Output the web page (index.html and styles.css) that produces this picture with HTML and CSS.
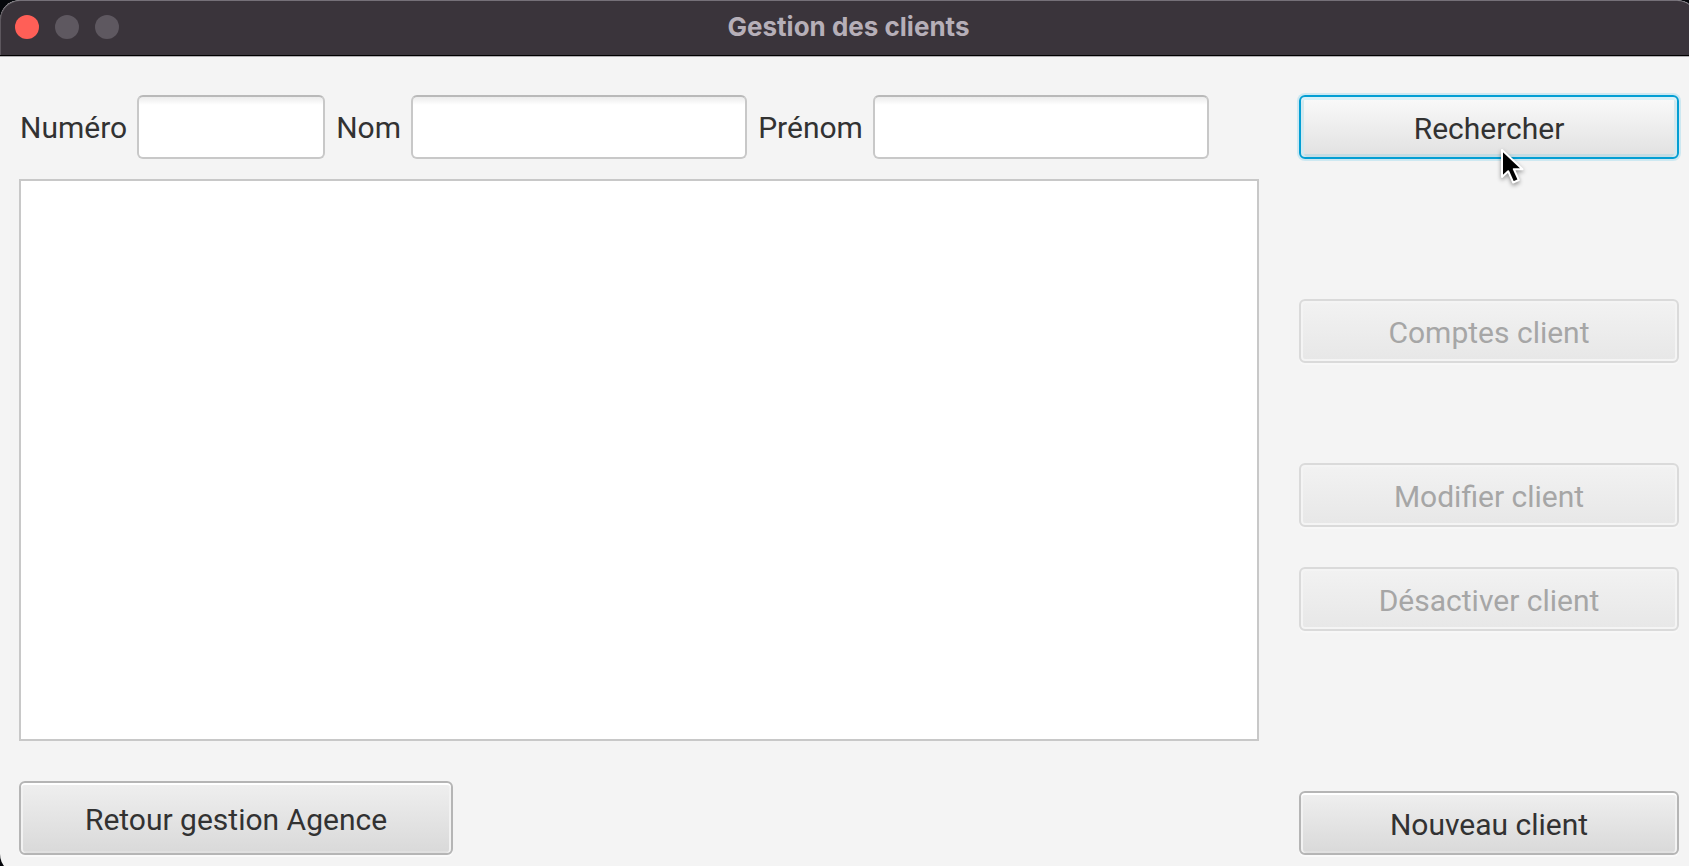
FILE: index.html
```html
<!DOCTYPE html>
<html lang="fr">
<head>
<meta charset="utf-8">
<title>Gestion des clients</title>
<link rel="stylesheet" href="styles.css">
</head>
<body>
<div class="window">
  <header class="titlebar">
    <div class="lights">
      <button class="light light-close" type="button" aria-label="Fermer"></button>
      <button class="light" type="button" aria-label="Réduire"></button>
      <button class="light" type="button" aria-label="Agrandir"></button>
    </div>
    <h1 class="title">Gestion des clients</h1>
  </header>
  <main class="content">
    <section class="left">
      <form class="search" id="search">
        <label class="label" for="numero">Numéro</label>
        <input class="field" id="numero" type="text">
        <label class="label" for="nom">Nom</label>
        <input class="field" id="nom" type="text">
        <label class="label" for="prenom">Prénom</label>
        <input class="field" id="prenom" type="text">
      </form>
      <div class="list" role="listbox" aria-label="Clients"></div>
      <button class="btn btn-back" type="button">Retour gestion Agence</button>
    </section>
    <aside class="actions">
      <div class="search-action">
        <button class="btn btn-focus" type="submit" form="search">Rechercher</button>
        <svg class="cursor" width="26" height="40" viewBox="0 0 26 40" aria-hidden="true">
          <path d="M2 2V29L8.2 23.2L13.2 34.5L18.8 32L13.8 21.2H22.5Z" fill="#000" stroke="#fff" stroke-width="2" stroke-linejoin="round"/>
        </svg>
      </div>
      <button class="btn btn-accounts" type="button" disabled>Comptes client</button>
      <div class="edit">
        <button class="btn" type="button" disabled>Modifier client</button>
        <button class="btn" type="button" disabled>Désactiver client</button>
      </div>
      <button class="btn btn-new" type="button">Nouveau client</button>
    </aside>
  </main>
</div>
</body>
</html>
```
FILE: styles.css
```css
* { box-sizing: border-box; }

body {
  margin: 0;
  overflow: hidden;
  background: #05070b;
  color: #323232;
  font-family: Roboto, "Liberation Sans", sans-serif;
  font-size: 30px;
}

.window {
  display: flex;
  flex-direction: column;
  min-height: calc(100vh + 8px);
  margin-right: -8px;
  overflow: hidden;
  border-radius: 20px;
  background: #f4f4f4;
}

.titlebar {
  display: grid;
  grid-template-columns: 1fr auto 1fr;
  align-items: center;
  height: 57px;
  padding: 0 15px 3px;
  border-top: 1px solid #757078;
  border-bottom: 1px solid #b0aeb1;
  border-radius: 20px 20px 0 0;
  background: #3a343b;
  box-shadow: inset 0 -1px #000, inset 1px 0 #5d575e;
}

.lights {
  display: flex;
  gap: 16px;
}

.light {
  width: 24px;
  height: 24px;
  padding: 0;
  border: 0;
  border-radius: 50%;
  background: #5e5860;
}

.light-close { background: #ff5f57; }

.title {
  margin: 0;
  color: #b6afb8;
  font-family: Inter, Roboto, sans-serif;
  font-size: 26px;
  font-weight: 700;
  line-height: 32px;
}

.content {
  display: flex;
  flex: 1;
  gap: 40px;
  padding: 38px 18px 19px 19px;
}

.left {
  display: flex;
  flex: 1;
  flex-direction: column;
}

.search {
  display: grid;
  grid-template-columns: auto 188fr auto 336fr auto 336fr;
  align-items: center;
  gap: 10px;
  margin: 0 50px 20px 0;
}

.label {
  padding-left: 1px;
  white-space: nowrap;
}

.field {
  width: 100%;
  min-width: 0;
  height: 64px;
  padding: 0 14px;
  border: 2px solid #c8c8c8;
  border-top-color: #b9b9b9;
  border-radius: 6px;
  background: linear-gradient(#ececec, #fff 8px);
  color: inherit;
  font: inherit;
  outline: 0;
}

.list {
  flex: 1;
  border: 2px solid #c8c8c8;
  background: #fff;
}

.btn {
  display: block;
  width: 100%;
  height: 64px;
  padding: 2px 16px 0;
  border: 2px solid #b5b5b5;
  border-radius: 6px;
  background: linear-gradient(#efefef, #d9d9d9);
  box-shadow: inset 0 2px #fff, inset 2px 0 #f2f2f2, inset -2px 0 #f2f2f2, inset 0 -2px #e0e0e0, 0 2px #fafafa;
  color: #323232;
  font: inherit;
}

.btn:disabled {
  border-color: #dadada;
  background: linear-gradient(#f2f2f2, #e7e7e7);
  box-shadow: inset 0 0 0 2px #f4f4f4, 0 2px #f7f7f7;
  color: #a6a6a6;
}

.btn-focus {
  border-color: #039ed3;
  background: linear-gradient(#fafafa, #e1e1e1);
  box-shadow: inset 0 3px #d9f1f8, inset 3px 0 #d3e9ef, inset -3px 0 #d3e9ef, inset 0 -3px #c4dce3, 0 0 0 2px #cde8f1;
}

.btn-back {
  width: 35%;
  height: 74px;
  margin-top: 40px;
}

.actions {
  display: flex;
  flex-direction: column;
  width: 380px;
}

.search-action { position: relative; }

.cursor {
  position: absolute;
  top: 53px;
  left: 201px;
  filter: drop-shadow(0 2px 2px rgba(0, 0, 0, 0.4));
}

.btn-accounts { margin: 140px 0 100px; }

.edit {
  display: grid;
  gap: 40px;
}

.btn-new { margin-top: auto; }
```
